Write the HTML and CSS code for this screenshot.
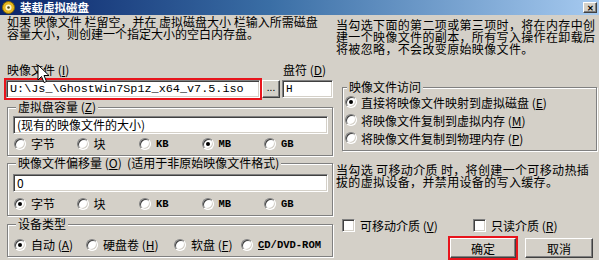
FILE: index.html
```html
<!DOCTYPE html>
<html lang="zh-CN">
<head>
    <meta charset="UTF-8">
    <title>装载虚拟磁盘</title>
    <link rel="stylesheet" href="styles.css">
</head>
<body>
    <div class="window">
        <!-- Title bar -->
        <div class="titlebar">
            <svg class="app-icon" width="13" height="13" viewBox="0 0 13 13">
                <circle cx="6.5" cy="6.5" r="6" fill="#e8b820" stroke="#8a6a00" stroke-width="1"/>
                <circle cx="6.5" cy="6.5" r="3" fill="#fff8d0"/>
                <circle cx="6.5" cy="6.5" r="1.3" fill="#5a4a10"/>
            </svg>
            <span class="title">装载虚拟磁盘</span>
            <span class="close">&#x2715;</span>
        </div>

        <div class="client">
            <!-- Left column -->
            <div class="col-left">
                <p class="note">如果 映像文件 栏留空，并在 虚拟磁盘大小 栏输入所需磁盘<br>容量大小，则创建一个指定大小的空白内存盘。</p>

                <div class="file-row">
                    <div class="file-field">
                        <div class="label">映像文件 (<u>I</u>)</div>
                        <div class="file-line">
                            <div class="marked">
                                <div class="edit path">U:\Js_\GhostWin7Sp1z_x64_v7.5.iso</div>
                            </div>
                            <div class="browse">...</div>
                        </div>
                    </div>
                    <div class="drive-field">
                        <div class="label">盘符 (<u>D</u>)</div>
                        <div class="edit drive">H</div>
                    </div>
                </div>

                <fieldset class="group">
                    <legend>虚拟盘容量 (<u>Z</u>)</legend>
                    <div class="edit wide">(现有的映像文件的大小)</div>
                    <div class="radios units">
                        <span class="opt"><i class="radio"></i>字节</span>
                        <span class="opt"><i class="radio"></i>块</span>
                        <span class="opt"><i class="radio"></i><b class="latin">KB</b></span>
                        <span class="opt"><i class="radio on"></i><b class="latin">MB</b></span>
                        <span class="opt"><i class="radio"></i><b class="latin">GB</b></span>
                    </div>
                </fieldset>

                <fieldset class="group second">
                    <legend>映像文件偏移量 (<u>O</u>) &nbsp;(适用于非原始映像文件格式)</legend>
                    <div class="edit wide">0</div>
                    <div class="radios units">
                        <span class="opt"><i class="radio on"></i>字节</span>
                        <span class="opt"><i class="radio"></i>块</span>
                        <span class="opt"><i class="radio"></i><b class="latin">KB</b></span>
                        <span class="opt"><i class="radio"></i><b class="latin">MB</b></span>
                        <span class="opt"><i class="radio"></i><b class="latin">GB</b></span>
                    </div>
                </fieldset>

                <fieldset class="group third">
                    <legend>设备类型</legend>
                    <div class="radios devices">
                        <span class="opt auto"><i class="radio on"></i>自动 (<u>A</u>)</span>
                        <span class="opt hdd"><i class="radio"></i>硬盘卷 (<u>H</u>)</span>
                        <span class="opt fdd"><i class="radio"></i>软盘 (<u>F</u>)</span>
                        <span class="opt cd"><i class="radio"></i><b class="latin"><u>C</u>D/DVD-ROM</b></span>
                    </div>
                </fieldset>
            </div>

            <!-- Right column -->
            <div class="col-right">
                <p class="note right-note">当勾选下面的第二项或第三项时，将在内存中创<br>建一个映像文件的副本，所有写入操作在卸载后<br>将被忽略，不会改变原始映像文件。</p>

                <fieldset class="group access">
                    <legend>映像文件访问</legend>
                    <div class="row"><i class="radio on"></i>直接将映像文件映射到虚拟磁盘 (<u>E</u>)</div>
                    <div class="row"><i class="radio"></i>将映像文件复制到虚拟内存 (<u>M</u>)</div>
                    <div class="row"><i class="radio"></i>将映像文件复制到物理内存 (<u>P</u>)</div>
                </fieldset>

                <p class="note removable-note">当勾选 可移动介质 时，将创建一个可移动热插<br>拔的虚拟设备，并禁用设备的写入缓存。</p>

                <div class="checks">
                    <span class="check-opt first"><i class="checkbox"></i>可移动介质 (<u>V</u>)</span>
                    <span class="check-opt"><i class="checkbox"></i>只读介质 (<u>R</u>)</span>
                </div>

                <div class="buttons">
                    <button class="button ok">确定</button>
                    <button class="button">取消</button>
                </div>
            </div>
        </div>

        <!-- mouse pointer captured in the screenshot -->
        <svg class="pointer" width="13" height="20" viewBox="0 0 13 20">
            <path d="M1 1 L1 16 L4.5 12.5 L7 18.5 L9.5 17.5 L7 11.5 L12 11.5 Z" fill="#fff" stroke="#000" stroke-width="1" stroke-linejoin="miter"/>
        </svg>
    </div>
</body>
</html>
```

FILE: styles.css
```css
body {
    margin: 0;
    font-family: "Noto Sans CJK SC", "Noto Sans", sans-serif;
    font-size: 12px;
    color: #000;
}
.window {
    position: relative;
    width: 599px;
    height: 260px;
    background-color: #d4d0c8;
    overflow: hidden;
}
/* Title bar */
.titlebar {
    height: 15px;
    display: flex;
    align-items: center;
    padding: 0 2px;
    background: linear-gradient(to right, #0a246a, #3a6ea5 45%, #a6caf0);
}
.app-icon {
    display: block;
}
.title {
    color: #fff;
    font-weight: bold;
    font-size: 11.5px;
    line-height: 15px;
    margin-left: 5px;
}
.close {
    margin-left: auto;
    width: 14px;
    height: 11px;
    box-sizing: border-box;
    background-color: #d4d0c8;
    border: 1px solid;
    border-color: #fff #404040 #404040 #fff;
    box-shadow: inset -1px -1px 0 #808080;
    font-size: 8px;
    font-weight: bold;
    line-height: 9px;
    text-align: center;
}
.client {
    display: flex;
}
.col-left {
    width: 336px;
    box-sizing: border-box;
    padding-left: 4px;
}
.col-right {
    flex: 1;
}
.note {
    margin: 1px 0 0 3px;
    line-height: 12px;
    white-space: nowrap;
}
.right-note {
    margin: 4px 0 0 0;
    letter-spacing: 0.35px;
}
/* File row */
.file-row {
    display: flex;
    margin-top: 24px;
}
.label {
    height: 12px;
    line-height: 12px;
    padding-left: 3px;
}
.file-line {
    display: flex;
    margin-top: 2px;
}
.marked {
    border: 2px solid #e8141c;
}
.edit {
    box-sizing: border-box;
    height: 18px;
    background-color: #fff;
    border: 1px solid;
    border-color: #808080 #fff #fff #808080;
    box-shadow: inset 1px 1px 0 #404040, inset -1px -1px 0 #d4d0c8;
    padding-left: 3px;
    line-height: 16px;
    white-space: nowrap;
    overflow: hidden;
}
.path {
    width: 254px;
    font-family: "Liberation Mono", monospace;
    font-size: 11.8px;
}
.browse {
    box-sizing: border-box;
    width: 18px;
    height: 18px;
    margin-top: 2px;
    border: 1px solid;
    border-color: #fff #404040 #404040 #fff;
    box-shadow: inset -1px -1px 0 #808080;
    font-size: 10px;
    line-height: 12px;
    text-align: center;
}
.drive-field {
    margin-left: 2px;
}
.drive-field .label {
    padding-left: 1px;
}
.drive {
    width: 51px;
    margin-top: 4px;
    font-family: "Liberation Mono", monospace;
    font-size: 11px;
}
/* Group boxes */
.group {
    margin: 1px 3px 0 3px;
    padding: 3px 4px 5px 5px;
    border: 1px solid #808080;
    box-shadow: inset 1px 1px 0 #fff, 1px 1px 0 #fff;
    min-width: 0;
}
.group legend {
    margin-left: 3px;
    padding: 0 2px;
    height: 12px;
    line-height: 12px;
    background-color: #d4d0c8;
}
.group.second {
    margin-top: 1px;
    padding-top: 5px;
}
.group.second .radios {
    margin-top: 6px;
}
.group.third {
    margin-top: 2px;
    padding-top: 9px;
    padding-bottom: 5px;
}
.wide {
    width: 100%;
}
.radios {
    display: flex;
    align-items: center;
    height: 12px;
    line-height: 12px;
    margin-top: 4px;
    padding-left: 1px;
}
.group .devices {
    margin-top: 0;
}
.opt {
    display: flex;
    align-items: center;
    width: 62.5px;
    flex: none;
    white-space: nowrap;
}
.devices .auto { width: 72px; }
.devices .hdd { width: 88px; }
.devices .fdd { width: 67px; }
.devices .cd { width: auto; }
.latin {
    font-family: "Liberation Mono", monospace;
    font-size: 10.5px;
    font-weight: bold;
}
.radio {
    position: relative;
    display: inline-block;
    box-sizing: border-box;
    width: 12px;
    height: 12px;
    margin-right: 5px;
    border: 1px solid;
    border-color: #808080 #fff #fff #808080;
    border-radius: 50%;
    background-color: #fff;
    box-shadow: inset 1px 1px 0 #404040, inset -1px -1px 0 #d4d0c8;
    flex: none;
}
.radio.on::after {
    content: "";
    position: absolute;
    left: 3px;
    top: 3px;
    width: 4px;
    height: 4px;
    border-radius: 50%;
    background-color: #000;
}
/* Right column */
.access {
    margin: 26px 2px 0 6px;
    padding: 0 2px 3px 1px;
}
.access .row {
    display: flex;
    align-items: center;
    height: 18px;
    white-space: nowrap;
}
.access .radio {
    margin-left: 1px;
    margin-right: 4px;
}
.removable-note {
    margin: 13px 0 0 0;
    letter-spacing: 0.35px;
}
.checks {
    display: flex;
    align-items: center;
    margin: 31px 0 0 6px;
    height: 13px;
}
.check-opt {
    display: flex;
    align-items: center;
}
.check-opt.first {
    width: 131px;
}
.checkbox {
    display: inline-block;
    box-sizing: border-box;
    width: 13px;
    height: 13px;
    margin-right: 5px;
    background-color: #fff;
    border: 1px solid;
    border-color: #808080 #fff #fff #808080;
    box-shadow: inset 1px 1px 0 #404040, inset -1px -1px 0 #d4d0c8;
}
.buttons {
    display: flex;
    justify-content: flex-end;
    margin: 6px 6px 0 0;
}
.button {
    box-sizing: border-box;
    width: 68px;
    height: 20px;
    margin-left: 9px;
    padding: 0;
    font-family: inherit;
    font-size: 12px;
    background-color: #d4d0c8;
    border: 1px solid;
    border-color: #fff #404040 #404040 #fff;
    box-shadow: inset -1px -1px 0 #808080;
}
.button.ok {
    width: 66px;
    outline: 2px solid #e8141c;
}
.pointer {
    position: absolute;
    left: 37px;
    top: 64px;
}
```
